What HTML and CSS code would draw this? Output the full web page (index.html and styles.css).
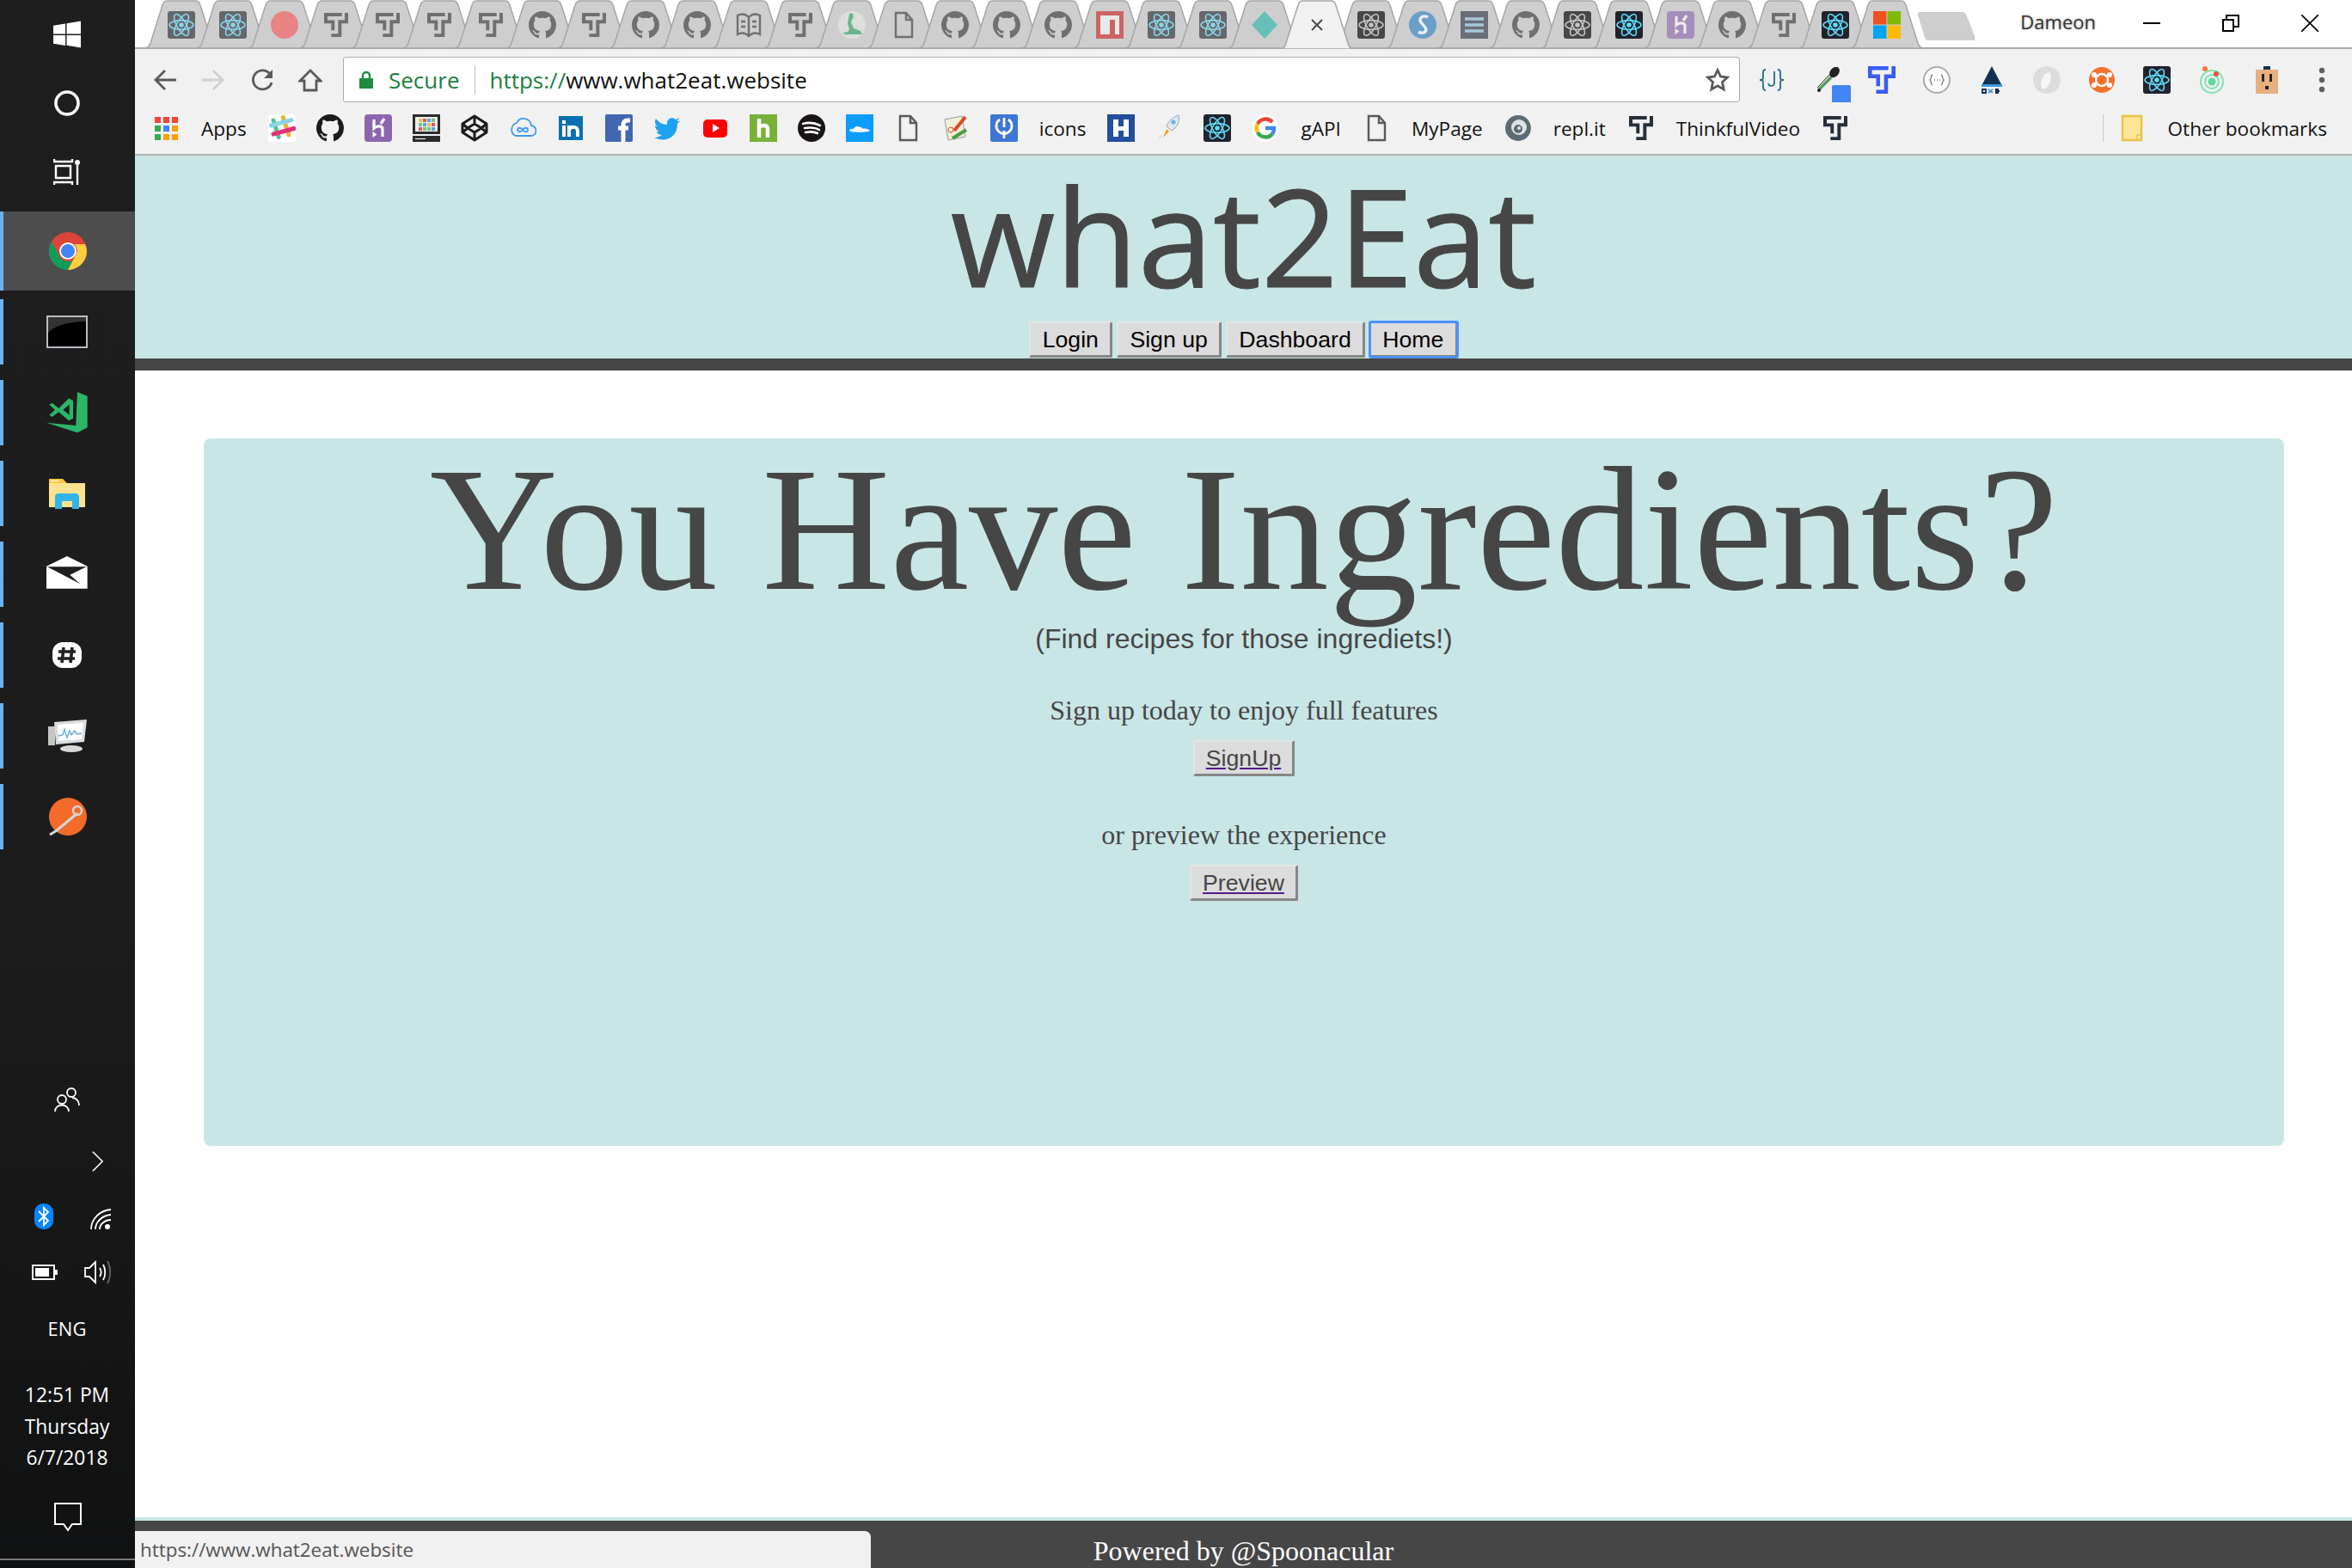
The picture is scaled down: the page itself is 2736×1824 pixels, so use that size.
FILE: index.html
```html
<!DOCTYPE html>
<html lang="en">
<head>
<meta charset="utf-8">
<title>what2Eat</title>
<link rel="stylesheet" href="styles.css">
</head>
<body>
<svg class="defs" aria-hidden="true">
  <symbol id="react" viewBox="0 0 32 32"><rect width="32" height="32" rx="3" fill="#20232a"/><g fill="none" stroke="#61dafb" stroke-width="1.6"><ellipse cx="16" cy="16" rx="14" ry="5.4"/><ellipse cx="16" cy="16" rx="14" ry="5.4" transform="rotate(60 16 16)"/><ellipse cx="16" cy="16" rx="14" ry="5.4" transform="rotate(120 16 16)"/></g><circle cx="16" cy="16" r="2.8" fill="#61dafb"/></symbol>
  <symbol id="reactg" viewBox="0 0 32 32"><rect width="32" height="32" rx="3" fill="#474747"/><g fill="none" stroke="#c4c4c4" stroke-width="1.6"><ellipse cx="16" cy="16" rx="14" ry="5.4"/><ellipse cx="16" cy="16" rx="14" ry="5.4" transform="rotate(60 16 16)"/><ellipse cx="16" cy="16" rx="14" ry="5.4" transform="rotate(120 16 16)"/></g><circle cx="16" cy="16" r="2.8" fill="#c4c4c4"/></symbol>
  <symbol id="gh" viewBox="0 0 16 16"><path fill="currentColor" d="M8 0C3.58 0 0 3.58 0 8c0 3.54 2.29 6.53 5.47 7.59.4.07.55-.17.55-.38 0-.19-.01-.82-.01-1.49-2.01.37-2.53-.49-2.69-.94-.09-.23-.48-.94-.82-1.13-.28-.15-.68-.52-.01-.53.63-.01 1.08.58 1.23.82.72 1.21 1.87.87 2.33.66.07-.52.28-.87.51-1.07-1.78-.2-3.64-.89-3.64-3.95 0-.87.31-1.59.82-2.15-.08-.2-.36-1.02.08-2.12 0 0 .67-.21 2.2.82.64-.18 1.32-.27 2-.27.68 0 1.36.09 2 .27 1.53-1.04 2.2-.82 2.2-.82.44 1.1.16 1.92.08 2.12.51.56.82 1.27.82 2.15 0 3.07-1.87 3.75-3.65 3.95.29.25.54.73.54 1.48 0 1.07-.01 1.93-.01 2.2 0 .21.15.46.55.38A8.013 8.013 0 0016 8c0-4.42-3.58-8-8-8z"/></symbol>
  <symbol id="t" viewBox="0 0 32 32"><path fill="currentColor" d="M0 0h23.6v4.600H4.600v5H14v13.600H9.500V14H0zM27.400 0H32v14h-8.800v18H9.500v-4.400h9.200V9.500h8.700z"/></symbol>
  <symbol id="doc" viewBox="0 0 32 32"><path fill="none" stroke="currentColor" stroke-width="2.400" d="M7 2h12l7 8v20H7z M19 2v8h7"/></symbol>
  <symbol id="book" viewBox="0 0 32 32"><path fill="none" stroke="currentColor" stroke-width="2.400" d="M16 7C12 3 7 3 3 5v22c4-2 9-2 13 2 4-4 9-4 13-2V5c-4-2-9-2-13 2zM16 7v22M7 12h5M7 18h5M20 12h5M20 18h5"/></symbol>
  <symbol id="hk" viewBox="0 0 32 32"><rect width="32" height="32" rx="4" fill="#8b66ae"/><path fill="none" stroke="#fff" stroke-width="3.200" d="M11 6v10c3-3 10-3 10 1v9M23 5l-4 6"/><path fill="#fff" d="M9.500 20l5 3.500-5 3.500z"/></symbol>
  <symbol id="ms" viewBox="0 0 32 32"><path fill="#f25022" d="M0 0h15.5v15.5H0z"/><path fill="#7fba00" d="M16.5 0H32v15.5H16.5z"/><path fill="#00a4ef" d="M0 16.5h15.5V32H0z"/><path fill="#ffb900" d="M16.5 16.5H32V32H16.5z"/></symbol>
</svg>
<div class="desktop">
  <aside class="taskbar">
    <div class="start-slot"><svg class="i32" viewBox="0 0 33 32"><path fill="#fff" d="M0 5.5 14.5 3v12.5H0zM16 2.800 33 0v15.500H16zM0 17h14.500v12.500L0 27zM16 17h17v15l-17-2.800z"/></svg></div>
    <div class="start-slot"><svg class="i32" viewBox="0 0 32 32"><circle cx="16" cy="16" r="13" fill="none" stroke="#fff" stroke-width="3.600"/></svg></div>
    <div class="start-slot"><svg class="i32" viewBox="0 0 32 32"><path fill="none" stroke="#fff" stroke-width="2.400" d="M1 1v3h21V1M1 31v-3h21v3M3 9h17v14H3z"/><circle cx="28" cy="5" r="3" fill="#fff"/><path stroke="#fff" stroke-width="2.400" d="M28 8v23"/></svg></div>
    <div class="apps">
      <div class="app active"><svg class="i44" viewBox="0 0 44 44"><circle cx="22" cy="22" r="22" fill="#db4437"/><path fill="#0f9d58" d="M22 44C10 44 0 34 0 22c0-4 1-8 3-11l11 20c2 2 5 3 8 3h5l-5 10z"/><path fill="#ffcd40" d="M44 22c0 12-10 22-22 22l10-19c2-4 0-9-3-11h13c1 2 2 5 2 8z"/><circle cx="22" cy="22" r="10" fill="#fff"/><circle cx="22" cy="22" r="8" fill="#4285f4"/></svg></div>
      <div class="app"><svg class="icmd" viewBox="0 0 48 38"><rect x="1" y="1" width="46" height="36" fill="#000" stroke="#b8bcc4" stroke-width="2"/><path fill="#333" d="M2 2h44v5C30 7 12 10 2 20z"/></svg></div>
      <div class="app"><svg class="box80" viewBox="-6 0 240 240"><path fill="#2cb566" d="M150 48l35 14v110l-35 18-108-35 103 10z"/><path fill="#2cb566" fill-rule="evenodd" d="M52 92l10-6 23 19 35-35 15 8v62l-15 8-35-30-23 17-10-7 20-18zM100 110l22 18V92z"/></svg></div>
      <div class="app"><svg class="i44" viewBox="0 0 44 36"><path fill="#f9c93f" d="M1 1h16l5 5h21v6H1z"/><path fill="#fde390" d="M1 6h42v28H1z"/><path fill="#31b4e8" d="M8 36V22q0-4 4-4h20q4 0 4 4v14h-8v-9H16v9z"/><path fill="#fff" d="M3 3h10v1H3z"/></svg></div>
      <div class="app"><svg class="box80x60" viewBox="-6 0 240 180"><path fill="#fff" d="M114 27l71 35v78H42V62z"/><path fill="#1e1e1e" d="M45 64h137l-58 28 36 32z"/></svg></div>
      <div class="app"><svg class="i36" viewBox="0 0 36 36"><rect x="1" y="3" width="34" height="30" rx="12" fill="#fff"/><path stroke="#222" stroke-width="3.600" d="M14 9l-2 18M24 9l-2 18M8 14h20M7 22h20"/></svg></div>
      <div class="app"><svg class="i48" viewBox="0 0 48 38"><path fill="#c3c7c4" d="M2 8h8v22H2z"/><path fill="#d9dde0" d="M9 3 47 0l-3 26-33 3z"/><path fill="#fff" d="M13 6l30-2-2 19-27 2z"/><path fill="none" stroke="#5ba7d8" stroke-width="1.300" d="M14 19l5-1 2-7 3 10 3-8 2 5 4-5 2 4 6-1"/><ellipse cx="29" cy="34" rx="13" ry="4" fill="#d8d8d8"/></svg></div>
      <div class="app"><svg class="i48" viewBox="0 0 48 48"><circle cx="25" cy="24" r="22" fill="#f26b2b"/><path fill="none" stroke="#d5d5d5" stroke-width="3" d="M4 45l8-5 24-20"/><circle cx="36" cy="17" r="5" fill="none" stroke="#d5d5d5" stroke-width="2.400"/></svg></div>
    </div>
    <div class="tray">
      <div class="tray-row row-people"><svg class="i32" viewBox="0 0 32 32"><g fill="none" stroke="#fff" stroke-width="1.800"><circle cx="21" cy="7" r="5"/><circle cx="10" cy="15" r="5"/><path d="M2 29c0-10 16-10 16 0M22 13c5 0 8 4 8 9"/></g></svg></div>
      <div class="tray-row row-chevron"><svg class="chev" viewBox="0 0 16 26"><path fill="none" stroke="#fff" stroke-width="1.700" d="M2 1l12 12L2 25"/></svg></div>
      <div class="tray-row row-bt"><svg class="bt" viewBox="0 0 22 30"><rect width="22" height="30" rx="10" fill="#0a84ff"/><path fill="none" stroke="#fff" stroke-width="1.800" d="M5 9l11 11-5 5V5l5 5L5 21"/></svg><svg class="wifi" viewBox="0 0 26 24"><g fill="none" stroke="#fff" stroke-width="1.800"><path d="M2 24C2 12 12 2 25 1M7 24c0-9 8-16 18-17M12 24c0-6 6-11 13-11"/></g><circle cx="21" cy="21" r="3" fill="#fff"/></svg></div>
      <div class="tray-row row-bat"><svg class="bat" viewBox="0 0 30 18"><rect x="1" y="1" width="25" height="16" fill="none" stroke="#fff" stroke-width="2"/><path fill="#fff" d="M4 4h16v10H4zM27 6h3v6h-3z"/></svg><svg class="vol" viewBox="0 0 32 28"><path fill="none" stroke="#fff" stroke-width="1.800" d="M2 9h5l7-7v24l-7-7H2zM19 9c2 3 2 7 0 10M23 5c3 5 3 13 0 18"/><path fill="none" stroke="#666" stroke-width="1.800" d="M28 1c4 7 4 19 0 26"/></svg></div>
      <div class="tray-row row-lang">ENG</div>
      <div class="clock"><div>12:51 PM</div><div>Thursday</div><div>6/7/2018</div></div>
      <div class="tray-row row-notify"><svg class="note" viewBox="0 0 32 34"><path fill="none" stroke="#fff" stroke-width="2" d="M1 1h30v24H21l-5 7-5-7H1z"/></svg></div>
    </div>
  </aside>

  <div class="browser">
    <div class="tabstrip">
      <div class="tab"><svg class="fav dim"><use href="#react"/></svg></div>
      <div class="tab"><svg class="fav dim"><use href="#react"/></svg></div>
      <div class="tab"><svg class="fav" viewBox="0 0 32 32"><circle cx="16" cy="16" r="16" fill="#e88484"/></svg></div>
      <div class="tab"><svg class="fav-t dim ink"><use href="#t"/></svg></div>
      <div class="tab"><svg class="fav-t dim ink"><use href="#t"/></svg></div>
      <div class="tab"><svg class="fav-t dim ink"><use href="#t"/></svg></div>
      <div class="tab"><svg class="fav-t dim ink"><use href="#t"/></svg></div>
      <div class="tab"><svg class="fav dim ink"><use href="#gh"/></svg></div>
      <div class="tab"><svg class="fav-t dim ink"><use href="#t"/></svg></div>
      <div class="tab"><svg class="fav dim ink"><use href="#gh"/></svg></div>
      <div class="tab"><svg class="fav dim ink"><use href="#gh"/></svg></div>
      <div class="tab"><svg class="fav dim ink"><use href="#book"/></svg></div>
      <div class="tab"><svg class="fav-t dim ink"><use href="#t"/></svg></div>
      <div class="tab"><svg class="fav" viewBox="0 0 32 32"><circle cx="16" cy="16" r="16" fill="#dcdfdc"/><path fill="#6db48a" d="M13 3c3-2 6 1 4 5l-2 5 3 7 8 3 2 4H9l4-6-2-7zM5 25l7-1-2 4z"/></svg></div>
      <div class="tab"><svg class="fav dim ink"><use href="#doc"/></svg></div>
      <div class="tab"><svg class="fav dim ink"><use href="#gh"/></svg></div>
      <div class="tab"><svg class="fav dim ink"><use href="#gh"/></svg></div>
      <div class="tab"><svg class="fav dim ink"><use href="#gh"/></svg></div>
      <div class="tab"><svg class="fav" viewBox="0 0 32 32"><path fill="#cd6464" d="M0 0h32v32H0z"/><path fill="#e8e8e8" d="M5 5h22v22h-5V10h-6v17H5z"/></svg></div>
      <div class="tab"><svg class="fav dim"><use href="#react"/></svg></div>
      <div class="tab"><svg class="fav dim"><use href="#react"/></svg></div>
      <div class="tab"><svg class="fav" viewBox="0 0 32 32"><path fill="#66c0b6" d="M16 0l15 16-15 16L1 16z"/></svg></div>
      <div class="tab tab-active"><svg class="close" viewBox="0 0 14 14"><path stroke="#444" stroke-width="1.800" d="M1 1l12 12M13 1L1 13"/></svg></div>
      <div class="tab"><svg class="fav"><use href="#reactg"/></svg></div>
      <div class="tab"><svg class="fav" viewBox="0 0 32 32"><circle cx="16" cy="16" r="16" fill="#6a9fc8"/><path fill="none" stroke="#e6eef5" stroke-width="3.400" d="M22 7c-6-3-11 1-8 6l5 6c3 5-3 8-8 5"/></svg></div>
      <div class="tab"><svg class="fav" viewBox="0 0 32 32"><path fill="#696e78" d="M0 0h32v32H0z"/><path stroke="#a7c7d9" stroke-width="3.400" d="M5 9h22M5 16h22M5 23h22"/></svg></div>
      <div class="tab"><svg class="fav dim ink"><use href="#gh"/></svg></div>
      <div class="tab"><svg class="fav"><use href="#reactg"/></svg></div>
      <div class="tab"><svg class="fav"><use href="#react"/></svg></div>
      <div class="tab"><svg class="fav dim"><use href="#hk"/></svg></div>
      <div class="tab"><svg class="fav dim ink"><use href="#gh"/></svg></div>
      <div class="tab"><svg class="fav-t dim ink"><use href="#t"/></svg></div>
      <div class="tab"><svg class="fav"><use href="#react"/></svg></div>
      <div class="tab"><svg class="fav"><use href="#ms"/></svg></div>
      <div class="newtab"></div>
      <div class="profile">Dameon</div>
      <div class="winbtn"><svg class="wi" viewBox="0 0 20 20"><path stroke="#000" stroke-width="2" d="M0 10h20"/></svg></div>
      <div class="winbtn"><svg class="wi" viewBox="0 0 20 20"><path fill="none" stroke="#000" stroke-width="2" d="M1 6h12v13H1zM5 6V1h14v13h-6"/></svg></div>
      <div class="winbtn"><svg class="wi" viewBox="0 0 20 20"><path stroke="#000" stroke-width="1.600" d="M0 0l20 20M20 0L0 20"/></svg></div>
    </div>

    <div class="toolbar">
      <div class="navbtn"><svg class="nav-ic" viewBox="0 0 28 28"><path fill="none" stroke="#5a5a5a" stroke-width="2.800" d="M27 14H4M14 3L3 14l11 11"/></svg></div>
      <div class="navbtn"><svg class="nav-ic" viewBox="0 0 28 28"><path fill="none" stroke="#d0d0d0" stroke-width="2.800" d="M1 14h23M14 3l11 11-11 11"/></svg></div>
      <div class="navbtn reload"><svg class="nav-ic" viewBox="0 0 28 28"><path fill="none" stroke="#5a5a5a" stroke-width="2.800" d="M24 17a11 11 0 1 1-2-10"/><path fill="#5a5a5a" d="M25 2v10H15z"/></svg></div>
      <div class="navbtn home"><svg class="nav-ic" viewBox="0 0 28 28"><path fill="none" stroke="#5a5a5a" stroke-width="2.800" d="M14 3L2 15h5v11h14V15h5z"/></svg></div>
      <div class="omnibox">
        <svg class="lock" viewBox="0 0 16 20"><path fill="#1e8a3e" d="M0 8h16v12H0z"/><path fill="none" stroke="#1e8a3e" stroke-width="2.400" d="M4 8V5a4 4 0 0 1 8 0v3"/></svg>
        <span class="secure">Secure</span>
        <span class="omni-sep"></span>
        <span class="url"><span class="scheme">https://</span>www.what2eat.website</span>
        <svg class="star" viewBox="0 0 28 28"><path fill="none" stroke="#5a5a5a" stroke-width="2.800" d="M14 2.500l3.500 7.500 8 1-6 5.500 1.700 8.500-7.200-4.200L6.800 25l1.700-8.500-6-5.500 8-1z"/></svg>
      </div>
      <div class="exts">
        <div class="ext"><svg class="ic" viewBox="0 0 32 32"><g fill="none" stroke="#1c6e7d" stroke-width="1.800"><path d="M9 4C5 4 6 8 6 12s-1 4-4 4c3 0 4 0 4 4s-1 8 3 8M23 4c4 0 3 4 3 8s1 4 4 4c-3 0-4 0-4 4s1 8-3 8M19 6v13c0 5-6 5-7 1"/></g></svg></div>
        <div class="ext"><svg class="dropper" viewBox="0 0 39 43"><path stroke="#5a9a5a" stroke-width="3.600" d="M16 12L2 26"/><path stroke="#222" stroke-width="1" fill="none" d="M14 9L0 24"/><circle cx="2" cy="27" r="2" fill="#222"/><ellipse cx="20" cy="6" rx="5" ry="7" transform="rotate(40 20 6)" fill="#222"/><rect x="17" y="21" width="22" height="22" rx="2" fill="#4285f4"/></svg></div>
        <div class="ext"><svg class="ic blue-t"><use href="#t"/></svg></div>
        <div class="ext"><svg class="ic" viewBox="0 0 32 32"><circle cx="16" cy="16" r="15" fill="#fff" stroke="#aaa" stroke-width="2"/><path fill="none" stroke="#777" stroke-width="1.300" d="M11 10c-2 0-1 5-3 6 2 1 1 6 3 6M21 10c2 0 1 5 3 6-2 1-1 6-3 6M13 16h1M16 16h1M19 16h1"/></svg></div>
        <div class="ext"><svg class="ic" viewBox="0 0 32 32"><path fill="#14304f" d="M16 0l11 21H5z"/><path fill="#3d9ad9" d="M4 21h24v3H4z"/><path fill="none" stroke="#14304f" stroke-width="1.800" d="M9 27H5v4h4zM25 29h-5M20 31h4M20 27h4"/><path stroke="#3d9ad9" stroke-width="1.800" d="M12 27l5 4M17 27l-5 4"/></svg></div>
        <div class="ext"><svg class="ic" viewBox="0 0 32 32"><circle cx="16" cy="16" r="16" fill="#dcdcdc"/><ellipse cx="15" cy="17" rx="5" ry="10" transform="rotate(20 15 17)" fill="#f6f6f6"/></svg></div>
        <div class="ext"><svg class="ic" viewBox="0 0 32 32"><circle cx="16" cy="16" r="15" fill="#f4702c"/><circle cx="16" cy="16" r="7" fill="none" stroke="#fff" stroke-width="2.400"/><g fill="#fff"><circle cx="7" cy="10" r="3"/><circle cx="25" cy="10" r="3"/><circle cx="7" cy="22" r="3"/><circle cx="25" cy="22" r="3"/></g></svg></div>
        <div class="ext"><svg class="ic"><use href="#react"/></svg></div>
        <div class="ext"><svg class="ic" viewBox="0 0 32 32"><g fill="none" stroke="#7fe3b7" stroke-width="2"><circle cx="16" cy="18" r="13"/><circle cx="16" cy="18" r="8"/></g><circle cx="16" cy="18" r="4.500" fill="#5ad9a0"/><circle cx="8" cy="3" r="3" fill="#f47a3a"/><circle cx="21" cy="9" r="3" fill="#e94e3d"/></svg></div>
        <div class="ext"><svg class="ic" viewBox="0 0 32 32"><path fill="#e8b07e" d="M3 4h26v28H3z"/><path fill="#14304f" d="M12 0h8v4h-8z"/><path fill="#222" d="M10 9h3v9h-3zM19 9h3v9h-3zM14 23h4v4h-4z"/></svg></div>
        <div class="ext"><svg class="dots" viewBox="0 0 8 30"><circle cx="4" cy="4" r="3.200" fill="#5f5f5f"/><circle cx="4" cy="15" r="3.200" fill="#5f5f5f"/><circle cx="4" cy="26" r="3.200" fill="#5f5f5f"/></svg></div>
      </div>
    </div>

    <div class="bookmarks">
      <div class="bm"><svg class="ic apps-grid" viewBox="0 0 27 27"><path fill="#f44336" d="M0 0h7v7H0zM10 0h7v7h-7zM20 0h7v7h-7z"/><path fill="#34a853" d="M0 10h7v7H0zM0 20h7v7H0z"/><path fill="#4285f4" d="M10 10h7v7h-7z"/><path fill="#fb9e00" d="M20 10h7v7h-7zM10 20h7v7h-7zM20 20h7v7h-7z"/></svg></div>
      <span class="bm-label">Apps</span>
      <div class="bm"><svg class="ic" viewBox="0 0 32 32"><rect width="32" height="32" rx="3" fill="#fff"/><g stroke-width="5" stroke-linecap="round" opacity=".88"><path stroke="#3eb890" d="M6 7l6.300 19.500"/><path stroke="#e9a820" d="M17.300 3.500L24 24"/><path stroke="#7bd0e0" d="M3.500 13L27 6.700"/><path stroke="#e01563" d="M6 23l24-6.500"/></g></svg></div>
      <div class="bm"><svg class="ic bk"><use href="#gh"/></svg></div>
      <div class="bm"><svg class="ic"><use href="#hk"/></svg></div>
      <div class="bm"><svg class="ic" viewBox="0 0 32 32"><path fill="#2c2c2c" d="M0 0h32v23H0zM0 25h32v7H0z"/><path fill="#eee" d="M3 3h26v17H3z"/><path fill="#e5c34a" d="M7 5h4v4H7zM17 10h4v4h-4z"/><path fill="#d95a5a" d="M12 5h4v4h-4zM22 10h4v4h-4zM7 15h4v4H7z"/><path fill="#5aa7d9" d="M17 5h4v4h-4zM12 10h4v4h-4zM22 15h4v4h-4z"/><path fill="#7bc27b" d="M22 5h4v4h-4zM7 10h4v4H7zM12 15h4v4h-4zM17 15h4v4h-4z"/><path fill="#fff" d="M3 28h12v1H3z"/></svg></div>
      <div class="bm"><svg class="ic" viewBox="0 0 32 32"><g fill="none" stroke="#1b1b1b" stroke-width="3" stroke-linejoin="round"><path d="M16 2l14 9v10l-14 9-14-9V11z"/><path d="M16 2v9l-8 5 8 5 8-5-8-5M16 21v9M2 11l6 5M30 11l-6 5M2 21l6-5M30 21l-6-5"/></g></svg></div>
      <div class="bm"><svg class="ic" viewBox="0 0 32 32"><path fill="none" stroke="#3f9cef" stroke-width="1.800" d="M8 25h17a6 6 0 0 0 1-12 9 9 0 0 0-17-3 8 8 0 0 0-1 15z"/><path fill="none" stroke="#3f9cef" stroke-width="1.800" d="M16 18c-2-3-6-3-6 0s4 3 6 0 6-3 6 0-4 3-6 0z"/></svg></div>
      <div class="bm"><svg class="ic" viewBox="0 0 32 32"><rect x="2" y="2" width="28" height="28" fill="#0a70ad"/><path fill="#fff" d="M6 13h4v13H6zM6 7h4v4H6z"/><path fill="none" stroke="#fff" stroke-width="4" d="M14 26V13M14 18c1-4 10-5 10 2v6"/></svg></div>
      <div class="bm"><svg class="ic" viewBox="0 0 32 32"><rect width="32" height="32" rx="2" fill="#4267b2"/><path fill="none" stroke="#fff" stroke-width="5" d="M29 7h-3c-3 0-5 2-5 5v20M15 16h12"/></svg></div>
      <div class="bm"><svg class="ic" viewBox="0 0 32 32"><path fill="#1da1f2" d="M31 7c-1 1-2 1-4 1 1-1 3-2 3-4-1 1-3 2-4 2-3-3-9-2-10 3 0 1 0 2 0 3C10 12 6 9 3 5c-2 3-1 7 2 9-1 0-2 0-3-1 0 3 2 6 5 7-1 0-2 0-3 0 1 3 3 4 6 4-3 2-6 3-9 3 12 6 27 1 27-16 1-1 2-2 3-4z"/></svg></div>
      <div class="bm"><svg class="ic" viewBox="0 0 32 32"><rect x="2" y="6" width="28" height="21" rx="5" fill="#f00"/><path fill="#fff" d="M13 11l8 5-8 5z"/></svg></div>
      <div class="bm"><svg class="ic" viewBox="0 0 32 32"><rect width="32" height="32" fill="#78b139"/><path fill="none" stroke="#fff" stroke-width="4.500" d="M11 5v22M11 15c3-3 10-3 10 2v10"/></svg></div>
      <div class="bm"><svg class="ic" viewBox="0 0 32 32"><circle cx="16" cy="16" r="16" fill="#191414"/><g fill="none" stroke="#fff" stroke-width="2.600" stroke-linecap="round"><path d="M6 11c7-2 14-1 20 2M8 16c6-1 12-1 17 2M9 21c5-1 10-1 14 1"/></g></svg></div>
      <div class="bm"><svg class="ic" viewBox="0 0 32 32"><rect width="32" height="32" fill="#0a9dfd"/><path fill="#fff" d="M4 19c2-3 4-2 5-2 1-3 5-4 7-2 2-1 3 1 4 2 2-1 6 0 8 2-2 2-20 3-24 0z"/></svg></div>
      <div class="bm"><svg class="ic ink2"><use href="#doc"/></svg></div>
      <div class="bm"><svg class="ic" viewBox="0 0 32 32"><path fill="#f1efd8" stroke="#999" d="M3 6l20-4 4 24-20 4z"/><path stroke="#d94b2a" stroke-width="4" d="M14 19L27 3"/><path stroke="#4b9c4b" stroke-width="4" d="M12 28l16-10"/><circle cx="10" cy="18" r="3" fill="none" stroke="#d94b2a"/></svg></div>
      <div class="bm"><svg class="ic" viewBox="0 0 32 32"><rect width="32" height="32" rx="2" fill="#3d76d8"/><path fill="none" stroke="#fff" stroke-width="2.800" d="M11 6a9 9 0 1 0 10 0M16 4v11M16 19v9"/></svg></div>
      <span class="bm-label">icons</span>
      <div class="bm"><svg class="ic" viewBox="0 0 32 32"><rect width="32" height="32" fill="#234f9c"/><path fill="#fff" d="M7 6h6v8h6V6h6v20h-6v-7h-6v7H7z"/></svg></div>
      <div class="bm"><svg class="ic" viewBox="0 0 32 32"><path fill="#dfe8ee" stroke="#8ea7b5" d="M27 1c2 8-2 14-8 18l-6-5C15 8 21 3 27 1z"/><circle cx="21" cy="9" r="2.500" fill="#6fb2dc"/><path fill="#f0a030" d="M13 17l3 3-7 7z"/><path fill="#cfd6da" d="M1 32l6-8 1 1z"/></svg></div>
      <div class="bm"><svg class="ic"><use href="#react"/></svg></div>
      <div class="bm"><svg class="ic" viewBox="0 0 32 32"><circle cx="16" cy="16" r="16" fill="#fff"/><g fill="none" stroke-width="4.500"><path stroke="#ea4335" d="M24 9A10.500 10.500 0 0 0 7 11"/><path stroke="#fbbc05" d="M7 11a10.500 10.500 0 0 0 0 10"/><path stroke="#34a853" d="M7 21a10.500 10.500 0 0 0 17 2"/><path stroke="#4285f4" d="M24 23a10.500 10.500 0 0 0 2-7H16"/></g></svg></div>
      <span class="bm-label">gAPI</span>
      <div class="bm"><svg class="ic ink2"><use href="#doc"/></svg></div>
      <span class="bm-label">MyPage</span>
      <div class="bm"><svg class="ic" viewBox="0 0 32 32"><circle cx="16" cy="16" r="15" fill="#5f6b73"/><circle cx="17" cy="15" r="9" fill="#dde3e6"/><circle cx="16" cy="17" r="5" fill="#5f6b73"/><circle cx="17" cy="16" r="2" fill="#dde3e6"/></svg></div>
      <span class="bm-label">repl.it</span>
      <div class="bm"><svg class="fav-t navy"><use href="#t"/></svg></div>
      <span class="bm-label">ThinkfulVideo</span>
      <div class="bm"><svg class="fav-t navy"><use href="#t"/></svg></div>
      <span class="bm-sep"></span>
      <div class="bm"><svg class="ic" viewBox="0 0 32 32"><path fill="#ffe596" stroke="#e8c24a" stroke-width="2.400" d="M4 2h22v28H4z"/><path fill="none" stroke="#e8c24a" stroke-width="1.500" d="M21 30v-6h5"/></svg></div>
      <span class="bm-label other">Other bookmarks</span>
    </div>

    <header class="site-header">
      <h1 class="site-title">what2Eat</h1>
      <nav class="site-nav">
        <button class="btn">Login</button>
        <button class="btn">Sign up</button>
        <button class="btn">Dashboard</button>
        <button class="btn btn-focus">Home</button>
      </nav>
    </header>

    <main class="page">
      <section class="card">
        <h2 class="headline">You Have Ingredients?</h2>
        <p class="sub">(Find recipes for those ingrediets!)</p>
        <p class="lead lead-first">Sign up today to enjoy full features</p>
        <button class="btn btn-link">SignUp</button>
        <p class="lead lead-second">or preview the experience</p>
        <button class="btn btn-link">Preview</button>
      </section>
    </main>

    <footer class="site-footer">
      <span>Powered by @Spoonacular</span>
      <div class="status">https://www.what2eat.website</div>
    </footer>
  </div>
</div>
</body>
</html>
```

FILE: styles.css
```css
* { box-sizing: border-box; }
html, body { margin: 0; height: 1824px; overflow: hidden; }
body { font-family: "Open Sans", sans-serif; background: #fff; }
.defs { position: absolute; width: 0; height: 0; }
.desktop { display: flex; width: 2736px; height: 1824px; overflow: hidden; }

/* taskbar */
.taskbar { width: 157px; flex: none; display: flex; flex-direction: column; background: linear-gradient(#1e1e1e, #1c1c1c 60%, #101112); color: #fff; padding-right: 1px; }
.start-slot { height: 80px; display: flex; align-items: center; justify-content: center; flex: none; }
.apps { margin-top: 5px; display: flex; flex-direction: column; }
.app { height: 94px; display: flex; align-items: center; justify-content: center; position: relative; }
.app::before { content: ""; position: absolute; left: 0; top: 9px; width: 4px; height: 76px; background: #6cb3ee; }
.app.active { background: #4d4d4d; height: 92px; margin: 1px -1px 1px 0; }
.app.active::before { top: 0; height: 92px; }
.i32 { width: 32px; height: 32px; }
.i36 { width: 36px; height: 36px; }
.i44 { width: 44px; height: 44px; }
.i48 { width: 48px; height: 48px; }
.icmd { width: 48px; height: 38px; }
.box80 { width: 80px; height: 80px; }
.box80x60 { width: 80px; height: 60px; }
.tray { margin-top: auto; display: flex; flex-direction: column; height: 579px; }
.tray-row { display: flex; align-items: center; justify-content: center; flex: none; }
.row-people { height: 70px; }
.row-chevron { height: 72px; justify-content: flex-end; padding-right: 35px; margin-bottom: 2px; }
.chev { width: 15px; height: 26px; }
.row-bt { height: 58px; justify-content: flex-start; padding-left: 40px; gap: 42px; }
.bt { width: 22px; height: 30px; margin-bottom: 6px; }
.wifi { width: 26px; height: 24px; }
.row-bat { height: 66px; justify-content: flex-start; padding-left: 37px; gap: 30px; }
.bat { width: 30px; height: 18px; }
.vol { width: 32px; height: 28px; }
.row-lang { height: 64px; font-size: 22px; }
.clock { margin-top: 28px; height: 110px; text-align: center; font-size: 22.8px; line-height: 36.5px; flex: none; }
.row-notify { height: 100px; border-bottom: 2px solid #777; padding-top: 2px; margin-right: -1px; }
.note { width: 32px; height: 34px; }

/* browser */
.browser { flex: 1; min-width: 0; display: flex; flex-direction: column; height: 1824px; }
.tabstrip { height: 57px; flex: none; display: flex; align-items: flex-start; padding: 0 3px 0 11px; background: #fff; box-shadow: inset 0 -2px 0 #a9a9a9; }
.tab { width: 86px; height: 57px; margin-right: -26px; flex: none; display: flex; align-items: center; justify-content: center; background: url("data:image/svg+xml,%3Csvg xmlns='http://www.w3.org/2000/svg' width='86' height='57'%3E%3Cpath d='M0 56C4 56 6 54 7 50L21 6C22 2 24 1 27 1H59C62 1 64 2 65 6L79 50C80 54 82 56 86 56Z' fill='%23cecece' stroke='%23a6a6a6' stroke-width='1.500'/%3E%3C/svg%3E") no-repeat; }
.tab-active { margin-left: 1px; margin-right: -23.5px; position: relative; z-index: 1; background-image: url("data:image/svg+xml,%3Csvg xmlns='http://www.w3.org/2000/svg' width='86' height='57'%3E%3Cpath d='M0 57C4 57 6 54 7 50L21 6C22 2 24 1 27 1H59C62 1 64 2 65 6L79 50C80 54 82 57 86 57Z' fill='%23f1f1f1' stroke='%23a6a6a6' stroke-width='1.500'/%3E%3C/svg%3E"); }
.fav { width: 32px; height: 32px; flex: none; }
.fav-t { width: 28px; height: 28px; flex: none; }
.dim { opacity: .6; }
.ink { color: #333; }
.close { width: 14px; height: 14px; }
.newtab { flex: none; width: 67px; height: 33px; margin: 14px 0 0 19px; background: #cecece; clip-path: polygon(0 6%, 3% 0, 80% 0, 84% 6%, 100% 88%, 100% 100%, 17% 100%, 13% 92%); }
.profile { margin-left: auto; margin-right: 19px; align-self: center; font-size: 22px; color: #333; text-shadow: 0 0 3px #999; padding-bottom: 8px; }
.winbtn { width: 92px; height: 54px; flex: none; display: flex; align-items: center; justify-content: center; }
.wi { width: 20px; height: 20px; }

.toolbar { height: 62px; flex: none; display: flex; align-items: center; background: #f1f1f1; padding: 9px 3px 0 7px; }
.navbtn { width: 56px; height: 53px; flex: none; display: flex; align-items: center; justify-content: center; }
.reload { padding-left: 4px; }
.home { padding-left: 2px; }
.nav-ic { width: 28px; height: 28px; }
.omnibox { flex: 1; height: 53px; margin-left: 11px; background: #fff; border: 1px solid #ababab; border-radius: 3px; display: flex; align-items: center; padding: 0 11px 0 18px; font-size: 26px; }
.lock { width: 16px; height: 20px; flex: none; }
.secure { color: #1e7e3e; margin-left: 18px; }
.omni-sep { width: 1px; height: 32px; background: #bbb; margin: 0 16px 0 18px; }
.url { color: #111; }
.scheme { color: #1e7e3e; }
.star { width: 28px; height: 28px; margin-left: auto; }
.exts { display: flex; margin-left: 5px; flex: none; }
.ext { width: 64px; height: 53px; display: flex; align-items: center; justify-content: center; }
.ic { width: 32px; height: 32px; flex: none; }
.dropper { width: 39px; height: 43px; margin: 13px 0 0 17px; flex: none; }
.blue-t { color: #3a5cf0; }
.dots { width: 8px; height: 30px; }

.bookmarks { height: 62px; flex: none; display: flex; align-items: center; background: #f1f1f1; border-bottom: 2px solid #b3b3b3; padding: 0 16px 0 8px; font-size: 22.6px; color: #111; }
.bm { width: 56px; height: 40px; flex: none; display: flex; align-items: center; justify-content: center; }
.bm-label { margin: 0 13px; white-space: nowrap; }
.bm-sep { width: 1px; height: 32px; background: #c8c8c8; margin-left: auto; margin-right: 6px; }
.apps-grid { width: 27px; height: 27px; }
.bk { color: #1b1b1b; }
.ink2 { color: #5a5a5a; }
.navy { color: #26303b; }

/* page */
.site-header { flex: none; background: #c8e6e6; border-bottom: 14px solid #464646; height: 250px; display: flex; flex-direction: column; align-items: center; }
.site-title { margin: 0 0 8px; font-family: "Open Sans", sans-serif; font-weight: 400; font-size: 157px; line-height: 185px; color: #464646; -webkit-text-stroke: 1px #464646; }
.site-nav { display: flex; gap: 5px; }
.btn { font-family: "Liberation Sans", Arial, sans-serif; font-size: 26.67px; height: 42px; padding: 1px 13.25px 0; background: #dcdcdc; color: #000; border-style: solid; border-width: 2px 3px 3px 2px; border-color: #e4e4e4 #878787 #878787 #e4e4e4; border-radius: 2px; }
.btn-focus { outline: 3px solid #4d90fe; outline-offset: -2px; }
.btn-link { color: #464646; text-decoration: underline; text-decoration-color: #551a8b; }

.page { flex: 1; padding: 79px 79px 0 80px; }
.card { height: 823px; background: #c8e6e6; border-radius: 8px; display: flex; flex-direction: column; align-items: center; color: #464646; text-align: center; }
.headline { margin: 0; font-family: "Liberation Serif", "Times New Roman", serif; font-weight: 400; font-size: 206.5px; line-height: 211px; }
.sub { margin: 4px 0 0; font-family: "Liberation Sans", Arial, sans-serif; font-size: 32px; line-height: 36px; }
.lead { font-family: "Liberation Serif", "Times New Roman", serif; font-size: 32px; line-height: 36px; margin: 0 0 17px; }
.lead-first { margin-top: 47px; }
.lead-second { margin-top: 50px; margin-bottom: 17px; }

.site-footer { flex: none; height: 59px; background: #464646; border-top: 4px solid #c8e6e6; color: #fff; text-align: center; font-family: "Liberation Serif", "Times New Roman", serif; font-size: 32px; line-height: 36px; padding-top: 17px; position: relative; }
.status { position: absolute; left: 0; bottom: 0; width: 856px; height: 43px; background: #f1f1f1; border-top-right-radius: 7px; text-align: left; padding-left: 6px; font-family: "Open Sans", sans-serif; font-size: 22.4px; line-height: 43px; color: #555; }
```
